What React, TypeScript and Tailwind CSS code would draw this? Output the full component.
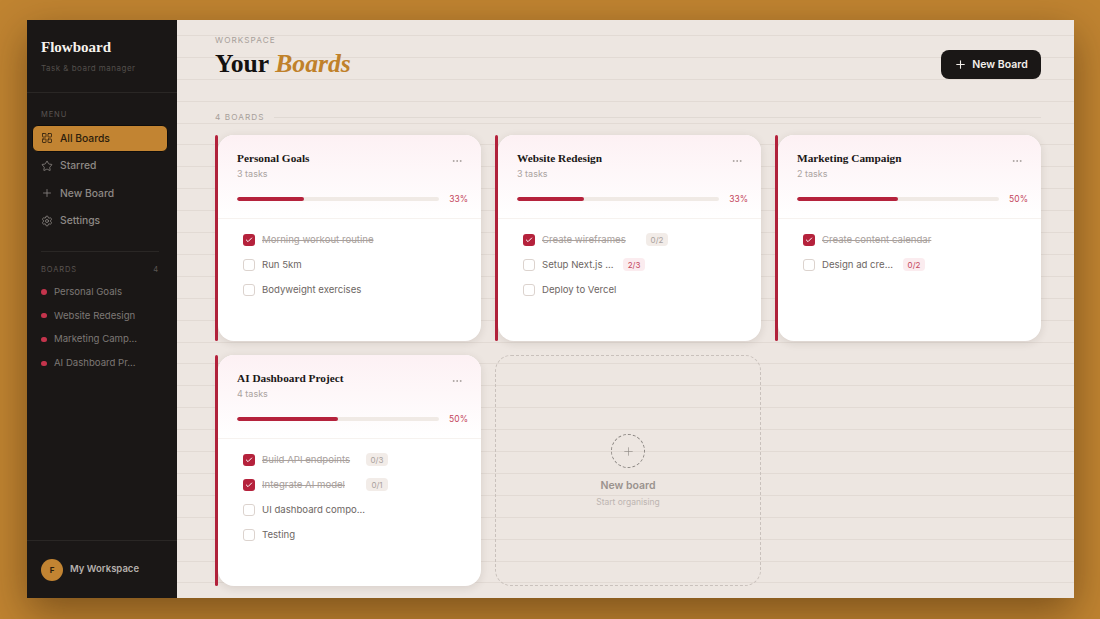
import { Check, Ellipsis, LayoutGrid, Plus, Settings, Star } from 'lucide-react';

type Task = { label: string; done?: boolean; badge?: string; width?: string };
type Board = { name: string; count: string; pct: number; barWidth: string; tasks: Task[] };

const boards: Board[] = [
  {
    name: 'Personal Goals',
    count: '3 tasks',
    pct: 33,
    barWidth: 'w-[33%]',
    tasks: [
      { label: 'Morning workout routine', done: true },
      { label: 'Run 5km' },
      { label: 'Bodyweight exercises' },
    ],
  },
  {
    name: 'Website Redesign',
    count: '3 tasks',
    pct: 33,
    barWidth: 'w-[33%]',
    tasks: [
      { label: 'Create wireframes', done: true, badge: '0/2', width: 'w-[94px]' },
      { label: 'Setup Next.js ...', badge: '2/3', width: 'w-[71px]' },
      { label: 'Deploy to Vercel' },
    ],
  },
  {
    name: 'Marketing Campaign',
    count: '2 tasks',
    pct: 50,
    barWidth: 'w-[50%]',
    tasks: [
      { label: 'Create content calendar', done: true },
      { label: 'Design ad cre...', badge: '0/2', width: 'w-[71px]' },
    ],
  },
  {
    name: 'AI Dashboard Project',
    count: '4 tasks',
    pct: 50,
    barWidth: 'w-[50%]',
    tasks: [
      { label: 'Build API endpoints', done: true, badge: '0/3', width: 'w-[94px]' },
      { label: 'Integrate AI model', done: true, badge: '0/1', width: 'w-[94px]' },
      { label: 'UI dashboard compo...' },
      { label: 'Testing' },
    ],
  },
];

const menu = [
  { label: 'All Boards', icon: LayoutGrid, active: true },
  { label: 'Starred', icon: Star },
  { label: 'New Board', icon: Plus },
  { label: 'Settings', icon: Settings },
];

const sideBoards = ['Personal Goals', 'Website Redesign', 'Marketing Camp...', 'AI Dashboard Pr...'];

function Sidebar() {
  return (
    <aside className="flex w-[150px] shrink-0 flex-col bg-[#1a1716]">
      <div className="h-[73px] border-b border-[#2a2725] pl-[14px] pt-[18px]">
        <div className="font-['Liberation_Serif',serif] text-[15px] font-bold leading-[18px] text-[#f7f3ee]">Flowboard</div>
        <div className="mt-[7px] text-[8px] leading-[10px] tracking-[0.06em] text-[#524e4b]">Task &amp; board manager</div>
      </div>

      <div className="pl-[5px] pr-[9px] pt-[17px]">
        <div className="pl-[9px] text-[7.5px] leading-[9px] tracking-[0.12em] text-[#5a5552]">MENU</div>
        <nav className="mt-[5.5px] flex flex-col">
          {menu.map((m) => (
            <div
              key={m.label}
              className={`flex h-[27.5px] items-center gap-[7px] rounded-md border pl-[8px] text-[10.3px] font-medium ${
                m.active ? 'border-[#0f0d0c] bg-[#c28432] text-[#2b1d0c]' : 'border-transparent text-[#8e8985]'
              }`}
            >
              <m.icon size={12} strokeWidth={1.6} />
              {m.label}
            </div>
          ))}
        </nav>
      </div>

      <div className="ml-[14px] mr-[18px] mt-[16.5px] flex items-center justify-between border-t border-[#2a2725] pt-[13px] text-[7.5px] leading-[9px] tracking-[0.12em] text-[#5a5552]">
        <span>BOARDS</span>
        <span>4</span>
      </div>
      <div className="mt-[6px] flex flex-col pl-[14px]">
        {sideBoards.map((b) => (
          <div key={b} className="flex h-[23.8px] items-center gap-[7.5px] text-[9.6px] text-[#7d7875]">
            <span className="h-[5.5px] w-[5.5px] rounded-full bg-[#c4344c]" />
            {b}
          </div>
        ))}
      </div>

      <div className="mt-auto flex h-[58px] items-center gap-[7px] border-t border-[#2a2725] pl-[14px]">
        <div className="flex h-[22px] w-[22px] items-center justify-center rounded-full bg-[#c28432] text-[8px] font-bold text-[#2b1d0c]">F</div>
        <span className="text-[9.5px] font-semibold text-[#b5b0ac]">My Workspace</span>
      </div>
    </aside>
  );
}

function TaskRow({ task }: { task: Task }) {
  return (
    <div className="flex h-[13px] items-center">
      {task.done ? (
        <span className="flex h-[12px] w-[12px] items-center justify-center rounded-[3px] bg-[#b5223c] text-white">
          <Check size={8} strokeWidth={3} />
        </span>
      ) : (
        <span className="h-[12px] w-[12px] rounded-[3px] border-[1.5px] border-[#dcd3ce] bg-white" />
      )}
      <span
        className={`ml-[7px] whitespace-nowrap text-[9.6px] leading-[13px] ${task.width ?? ''} ${
          task.done ? 'text-[#a9a19d] line-through' : 'text-[#6d6663]'
        }`}
      >
        {task.label}
      </span>
      {task.badge && (
        <span
          className={`ml-[10px] flex h-[13px] w-[22px] items-center justify-center rounded-[4px] text-[8px] ${
            task.done ? 'bg-[#f2ece8] text-[#a9a19d]' : 'bg-[#fbecef] text-[#c4475c]'
          }`}
        >
          {task.badge}
        </span>
      )}
    </div>
  );
}

function BoardCard({ board }: { board: Board }) {
  return (
    <div className="flex">
      <div className="w-[3px] shrink-0 rounded-full bg-[#b5223c]" />
      <div className="flex-1 overflow-hidden rounded-2xl bg-white shadow-[0_2px_8px_rgba(60,40,30,0.12)]">
        <div className="h-[84px] border-b border-[#f6f2ef] bg-gradient-to-b from-[#fdf1f4] to-white pl-[19px] pr-[13px] pt-[16px]">
          <div className="flex items-start justify-between pr-[5px]">
            <div className="font-['Liberation_Serif',serif] text-[11.3px] font-bold leading-[15px] text-[#1a1716]">{board.name}</div>
            <Ellipsis size={12} strokeWidth={1.5} className="mt-[4px] text-[#9a938f]" />
          </div>
          <div className="mt-0 text-[9px] leading-[13px] text-[#aaa3a0]">{board.count}</div>
          <div className="mt-[14px] flex items-center justify-between">
            <div className="h-[3.5px] w-[202px] overflow-hidden rounded-full bg-[#f0eae5]">
              <div className={`h-full rounded-full bg-[#b5223c] ${board.barWidth}`} />
            </div>
            <span className="text-[8.5px] leading-[10px] text-[#c4475c]">{board.pct}%</span>
          </div>
        </div>
        <div className="flex flex-col gap-[12px] pb-[45px] pl-[25px] pt-[14px]">
          {board.tasks.map((t) => (
            <TaskRow key={t.label} task={t} />
          ))}
        </div>
      </div>
    </div>
  );
}

function NewBoardTile() {
  return (
    <div className="flex flex-col items-center rounded-2xl border border-dashed border-[#c9c1bc] pt-[78px]">
      <div className="flex h-[34px] w-[34px] items-center justify-center rounded-full border border-dashed border-[#8e8985] text-[#8e8985]">
        <Plus size={13} strokeWidth={1.2} />
      </div>
      <div className="mt-[11px] text-[10.5px] font-semibold leading-[14px] text-[#9a928e]">New board</div>
      <div className="mt-[3px] text-[8.5px] leading-[12px] text-[#bdb5b1]">Start organising</div>
    </div>
  );
}

export default function App() {
  return (
    <div className="h-[619px] w-[1100px] overflow-hidden bg-[#c08431] px-[27px] pt-[20px] font-['Inter',sans-serif]">
      <div className="flex h-[578px] w-[1047px] shadow-[0_14px_40px_rgba(40,20,0,0.45)]">
        <Sidebar />
        <main className="flex-1 bg-[#ede6e1] bg-[repeating-linear-gradient(to_bottom,transparent_0,transparent_15px,#e2dad4_15px,#e2dad4_16px,transparent_16px,transparent_21.9px)] pl-[38px] pr-[33px] pt-[15px]">
          <header className="flex items-start justify-between">
            <div>
              <div className="text-[8.2px] leading-[10px] tracking-[0.13em] text-[#a79f9a]">WORKSPACE</div>
              <h1 className="mt-[3px] font-['Liberation_Serif',serif] text-[25.7px] font-bold leading-[32px] text-[#141110]">
                Your <em className="text-[#c0812a]">Boards</em>
              </h1>
            </div>
            <button className="mt-[15px] flex h-[29px] w-[100px] items-center justify-center gap-[5px] rounded-lg bg-[#1a1716] text-[10.5px] font-semibold text-[#f3efeb]">
              <Plus size={13} strokeWidth={2} />
              New Board
            </button>
          </header>

          <div className="mt-[32px] flex items-center gap-[9px] text-[8.2px] leading-[10px] tracking-[0.13em] text-[#a79f9a]">
            <span>4 BOARDS</span>
            <span className="h-px flex-1 bg-[#e0d9d3]" />
          </div>

          <div className="mt-[13px] grid grid-cols-3 gap-[14px]">
            {boards.map((b) => (
              <BoardCard key={b.name} board={b} />
            ))}
            <NewBoardTile />
          </div>
        </main>
      </div>
    </div>
  );
}
